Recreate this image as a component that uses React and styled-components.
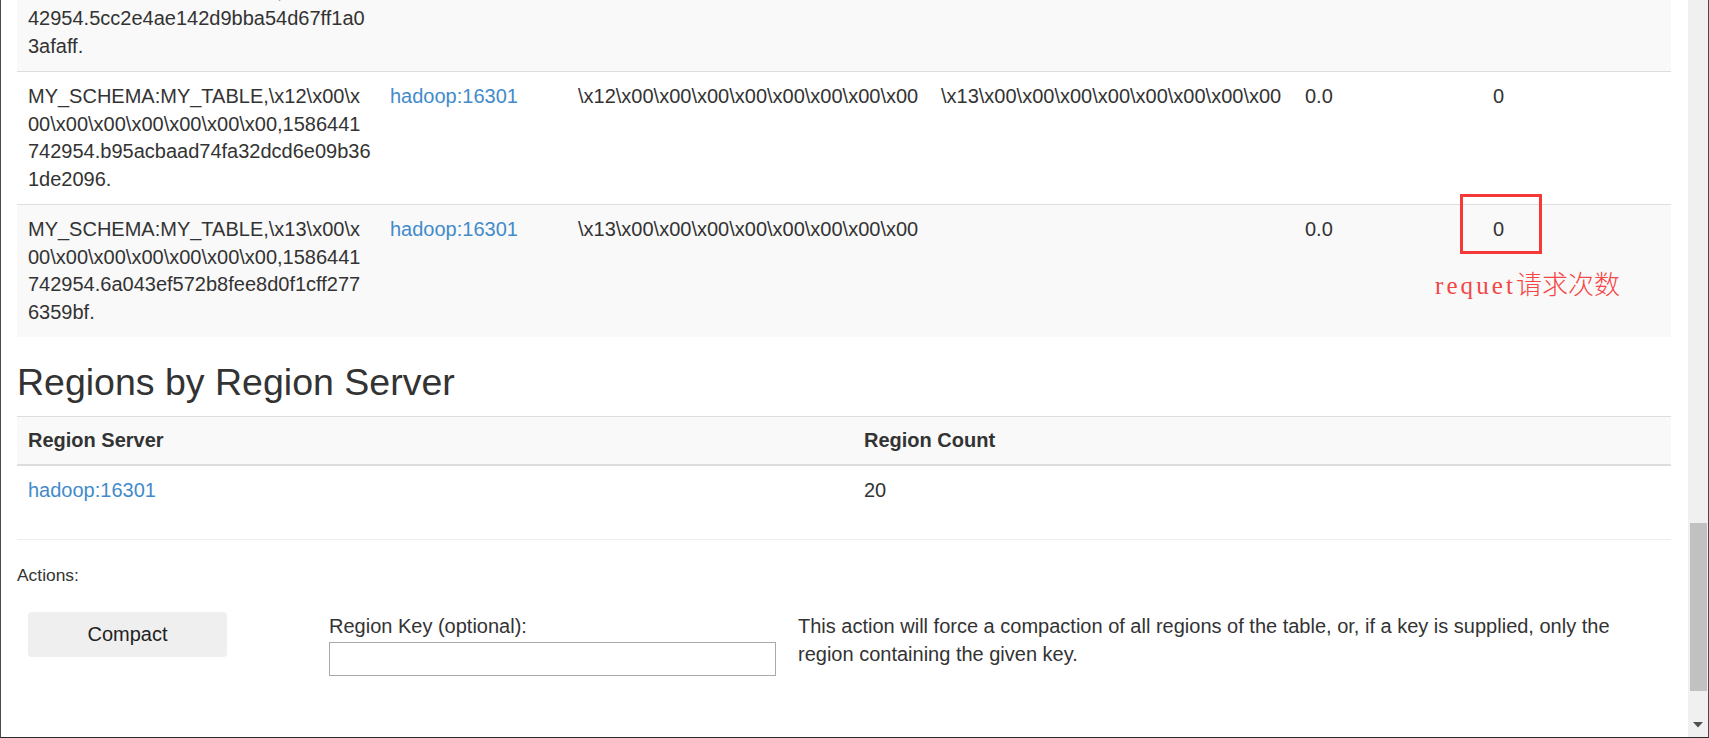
import React from 'react';
import styled, { createGlobalStyle } from 'styled-components';

const GlobalStyle = createGlobalStyle`
  html, body {
    margin: 0;
    padding: 0;
    background: #fff;
    overflow: hidden;
  }
  body {
    font-family: "Liberation Sans", Arial, sans-serif;
    color: #333;
  }
`;

const Frame = styled.div`
  position: relative;
  display: flex;
  width: 1709px;
  height: 738px;
  box-sizing: border-box;
  border-left: 1px solid #4a4a4a;
  border-right: 1px solid #4a4a4a;
  border-bottom: 1px solid #2a2a2a;
  overflow: hidden;
  background: #fff;
`;

const Page = styled.main`
  flex: 1;
  min-width: 0;
  padding: 0 17px 0 16px;
  font-size: 20px;
  line-height: 27.5px;
`;

// the page is scrolled: the first region row is cut by the top edge
const Scrolled = styled.div`
  margin-top: -62px;
`;

const DataTable = styled.table`
  width: 100%;
  table-layout: fixed;
  border-collapse: collapse;
  border-spacing: 0;
`;

const Row = styled.tr`
  background: ${props => (props.$striped ? '#f9f9f9' : '#fff')};
`;

const Cell = styled.td`
  padding: 11px;
  vertical-align: top;
  text-align: left;
  border-top: ${props => (props.$ruled ? '1px solid #ddd' : 'none')};
`;

const HeadCell = styled.th`
  padding: 9.5px 11px;
  text-align: left;
  font-weight: bold;
  vertical-align: bottom;
  background: #f9f9f9;
  border-top: 1px solid #ddd;
  border-bottom: 2px solid #ddd;
`;

const Line = styled.span`
  display: block;
  white-space: nowrap;
`;

const ServerLink = styled.a`
  color: #428bca;
  text-decoration: none;
`;

const SectionTitle = styled.h2`
  margin: 24.5px 0 13.5px;
  font-size: 37.5px;
  line-height: 41px;
  font-weight: 500;
  color: #333;
`;

const Divider = styled.hr`
  height: 0;
  margin: 24px 0 0;
  border: 0;
  border-top: 1px solid #eee;
`;

const ActionsLabel = styled.div`
  margin-top: 23px;
  font-size: 17.4px;
  line-height: 24px;
`;

const ActionsTable = styled.table`
  width: 100%;
  margin-top: 14px;
  table-layout: fixed;
  border-collapse: collapse;
`;

const ActionCell = styled.td`
  padding: 12px 11px;
  vertical-align: top;
`;

const CompactButton = styled.button`
  display: block;
  width: 199px;
  height: 45px;
  margin-top: -1px;
  padding: 0;
  border: none;
  border-radius: 4px;
  background: #efefef;
  color: #222;
  font-family: inherit;
  font-size: 20px;
  cursor: pointer;
`;

const FieldLabel = styled.label`
  display: block;
`;

const KeyInput = styled.input`
  display: block;
  width: 100%;
  height: 34px;
  margin: 1px 0 0;
  box-sizing: border-box;
  border: 1px solid #a9a9a9;
  border-radius: 0;
  font-family: inherit;
  font-size: 18px;
`;

const ScrollTrack = styled.div`
  flex: none;
  width: 20px;
  display: flex;
  flex-direction: column;
  background: #f0f0f0;
`;

const ScrollThumb = styled.div`
  width: 17px;
  height: 168px;
  margin: 523px 0 0 2px;
  background: #c1c1c1;
`;

const ScrollArrow = styled.div`
  margin-top: auto;
  height: 24px;
  display: flex;
  align-items: center;
  justify-content: center;
`;

const RequestMark = styled.div`
  position: absolute;
  left: 1459px;
  top: 194px;
  width: 82px;
  height: 60px;
  box-sizing: border-box;
  border: 3px solid #f53838;
`;

const RequestNote = styled.div`
  position: absolute;
  left: 1434px;
  top: 268px;
  line-height: 30px;
  white-space: nowrap;
  color: #f54646;
`;

const NoteLatin = styled.span`
  font-family: "Liberation Serif", "Times New Roman", serif;
  font-size: 25px;
  letter-spacing: 3.1px;
`;

const NoteCjk = styled.span`
  font-family: "Noto Sans CJK SC", sans-serif;
  font-size: 26px;
  font-weight: 300;
`;

const zeros = String.raw`\x00\x00\x00\x00\x00\x00\x00\x00`;

const regions = [
  {
    key: [
      String.raw`MY_SCHEMA:MY_TABLE,\x11\x00\x`,
      String.raw`00\x00\x00\x00\x00\x00\x00,15864417`,
      '42954.5cc2e4ae142d9bba54d67ff1a0',
      '3afaff.',
    ],
    start: String.raw`\x11` + zeros,
    end: String.raw`\x12` + zeros,
  },
  {
    key: [
      String.raw`MY_SCHEMA:MY_TABLE,\x12\x00\x`,
      String.raw`00\x00\x00\x00\x00\x00\x00,1586441`,
      '742954.b95acbaad74fa32dcd6e09b36',
      '1de2096.',
    ],
    start: String.raw`\x12` + zeros,
    end: String.raw`\x13` + zeros,
  },
  {
    key: [
      String.raw`MY_SCHEMA:MY_TABLE,\x13\x00\x`,
      String.raw`00\x00\x00\x00\x00\x00\x00,1586441`,
      '742954.6a043ef572b8fee8d0f1cff277',
      '6359bf.',
    ],
    start: String.raw`\x13` + zeros,
    end: '',
  },
];

const regionCols = [362, 188, 363, 364, 188, 189];

export default function App() {
  return (
    <>
      <GlobalStyle />
      <Frame>
        <Page>
          <Scrolled>
            <DataTable>
              <colgroup>
                {regionCols.map((w, i) => (
                  <col key={i} style={{ width: w }} />
                ))}
              </colgroup>
              <tbody>
                {regions.map((r, i) => (
                  <Row key={i} $striped={i % 2 === 0}>
                    <Cell $ruled>
                      {r.key.map((part, j) => (
                        <Line key={j}>{part}</Line>
                      ))}
                    </Cell>
                    <Cell $ruled>
                      <ServerLink href="#">hadoop:16301</ServerLink>
                    </Cell>
                    <Cell $ruled>
                      <Line>{r.start}</Line>
                    </Cell>
                    <Cell $ruled>
                      <Line>{r.end}</Line>
                    </Cell>
                    <Cell $ruled>0.0</Cell>
                    <Cell $ruled>0</Cell>
                  </Row>
                ))}
              </tbody>
            </DataTable>
          </Scrolled>

          <SectionTitle>Regions by Region Server</SectionTitle>
          <DataTable>
            <colgroup>
              <col style={{ width: 836 }} />
              <col style={{ width: 818 }} />
            </colgroup>
            <thead>
              <tr>
                <HeadCell>Region Server</HeadCell>
                <HeadCell>Region Count</HeadCell>
              </tr>
            </thead>
            <tbody>
              <Row>
                <Cell>
                  <ServerLink href="#">hadoop:16301</ServerLink>
                </Cell>
                <Cell>20</Cell>
              </Row>
            </tbody>
          </DataTable>
          <Divider />

          <ActionsLabel>Actions:</ActionsLabel>
          <ActionsTable>
            <colgroup>
              <col style={{ width: 301 }} />
              <col style={{ width: 469 }} />
              <col style={{ width: 884 }} />
            </colgroup>
            <tbody>
              <tr>
                <ActionCell>
                  <CompactButton type="button">Compact</CompactButton>
                </ActionCell>
                <ActionCell>
                  <FieldLabel htmlFor="key">Region Key (optional):</FieldLabel>
                  <KeyInput id="key" type="text" />
                </ActionCell>
                <ActionCell>
                  This action will force a compaction of all regions of the table, or, if a key is
                  supplied, only the region containing the given key.
                </ActionCell>
              </tr>
            </tbody>
          </ActionsTable>
        </Page>

        <ScrollTrack>
          <ScrollThumb />
          <ScrollArrow>
            <svg width="10" height="6" viewBox="0 0 10 6">
              <path d="M0 0h10L5 5.5z" fill="#505050" />
            </svg>
          </ScrollArrow>
        </ScrollTrack>

        <RequestMark />
        <RequestNote>
          <NoteLatin>requet</NoteLatin>
          <NoteCjk>请求次数</NoteCjk>
        </RequestNote>
      </Frame>
    </>
  );
}
